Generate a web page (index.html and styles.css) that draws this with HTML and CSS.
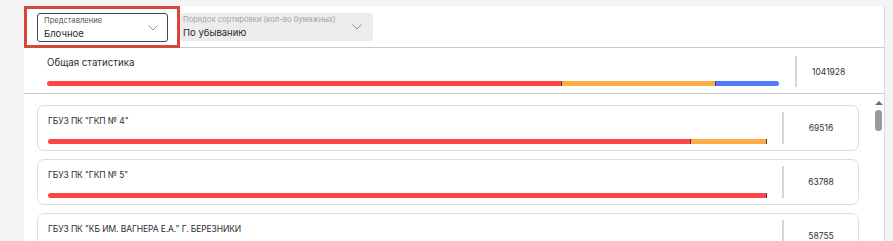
FILE: index.html
```html
<!DOCTYPE html>
<html lang="ru">
<head>
  <meta charset="UTF-8" />
  <title>Статистика</title>
  <link rel="stylesheet" href="styles.css">
</head>
<body>
  <div class="panel">

    <!-- фильтры -->
    <div class="toolbar">
      <div class="highlight">
        <div class="select select-active">
          <div class="select-text">
            <span class="select-label">Представление</span>
            <span class="select-value">Блочное</span>
          </div>
          <svg class="chevron" width="10" height="6" viewBox="0 0 10 6"><polyline points="0.5,0.5 5,5 9.5,0.5" fill="none" stroke="#8a8f99" stroke-width="1"/></svg>
        </div>
      </div>
      <div class="select select-disabled">
        <div class="select-text">
          <span class="select-label">Порядок сортировки (кол-во бумажных)</span>
          <span class="select-value">По убыванию</span>
        </div>
        <svg class="chevron" width="10" height="6" viewBox="0 0 10 6"><polyline points="0.5,0.5 5,5 9.5,0.5" fill="none" stroke="#8a8f99" stroke-width="1"/></svg>
      </div>
    </div>

    <!-- общая статистика -->
    <div class="summary">
      <div class="summary-main">
        <div class="summary-title">Общая статистика</div>
        <div class="bar bar-rounded">
          <div class="seg seg-red tick" style="width: 70.4%"></div>
          <div class="seg seg-orange tick" style="width: 21%"></div>
          <div class="seg seg-blue" style="width: 8.6%"></div>
        </div>
      </div>
      <div class="summary-value">1041928</div>
    </div>

    <!-- список -->
    <div class="list-wrap">
      <div class="list">
        <div class="card">
          <div class="card-main">
            <div class="card-title">ГБУЗ ПК "ГКП № 4"</div>
            <div class="bar">
              <div class="seg seg-red tick" style="width: 89.4%"></div>
              <div class="seg seg-orange tick" style="width: 10.6%"></div>
            </div>
          </div>
          <div class="card-value">69516</div>
        </div>
        <div class="card">
          <div class="card-main">
            <div class="card-title">ГБУЗ ПК "ГКП № 5"</div>
            <div class="bar">
              <div class="seg seg-red tick" style="width: 100%"></div>
            </div>
          </div>
          <div class="card-value">63788</div>
        </div>
        <div class="card">
          <div class="card-main">
            <div class="card-title">ГБУЗ ПК "КБ ИМ. ВАГНЕРА Е.А." Г. БЕРЕЗНИКИ</div>
            <div class="bar">
              <div class="seg seg-red tick" style="width: 92%"></div>
            </div>
          </div>
          <div class="card-value">58755</div>
        </div>
      </div>
      <div class="scrollbar">
        <div class="scroll-arrow"></div>
        <div class="scroll-thumb"></div>
      </div>
    </div>

  </div>
</body>
</html>
```
FILE: styles.css
```css
html, body {
  height: 100%;
}
body {
  margin: 0;
  background: #f4f4f4;
  font-family: 'Inter', 'Noto Sans', sans-serif;
  color: #2e2e33;
  overflow: hidden;
}
.panel {
  margin: 6px 0 0 24px;
  width: 860px;
  height: 235px;
  background: #fff;
  border-right: 1px solid #dcdcdc;
  overflow: hidden;
}
.toolbar {
  display: flex;
  align-items: flex-start;
  height: 41px;
  border-bottom: 1px solid #c9c9c9;
}
.highlight {
  flex-shrink: 0;
  width: 156px;
  height: 42px;
  box-sizing: border-box;
  border: 3px solid #d8463b;
  padding: 4px 0 0 10px;
  margin-bottom: -1px;
}
.highlight .select {
  width: 131px;
}
.select {
  display: flex;
  align-items: center;
  justify-content: space-between;
  height: 29px;
  box-sizing: border-box;
  padding: 0 9px 0 7px;
  border-radius: 3px;
}
.select-active {
  border: 1.5px solid #3c4262;
  padding-left: 6px;
}
.select-disabled {
  flex-shrink: 0;
  margin-top: 7px;
  width: 193px;
  height: 28px;
  background: #ececec;
  padding-left: 3px;
  padding-right: 11px;
}
.select-text {
  display: flex;
  flex-direction: column;
  line-height: 1;
  white-space: nowrap;
}
.select-label {
  font-size: 7.6px;
  color: #555;
  margin-bottom: 4px;
}
.select-disabled .select-label {
  color: #a5a5a5;
}
.select-value {
  font-size: 9.5px;
  color: #2a2a30;
}
.chevron {
  flex-shrink: 0;
}
.summary {
  display: flex;
  height: 45px;
  border-bottom: 1px solid #c9c9c9;
}
.summary-main {
  flex: 1;
  padding: 9px 16px 0 23px;
}
.summary-title {
  font-size: 9.7px;
  height: 24px;
  line-height: 12px;
}
.summary-value {
  width: 72px;
  margin: 8px 0 6px;
  border-left: 2px solid #d6d6d6;
  padding-left: 15px;
  font-size: 8.5px;
  display: flex;
  align-items: center;
  color: #333;
}
.bar {
  display: flex;
  height: 5px;
  border-radius: 3px 0 0 3px;
  overflow: hidden;
}
.bar-rounded {
  border-radius: 3px;
}
.seg {
  height: 100%;
  box-sizing: border-box;
}
.seg-red {
  background: #ff4545;
}
.seg-orange {
  background: #ffab43;
}
.seg-blue {
  background: #4f78ff;
}
.tick {
  border-right: 1px solid #4a3a30;
}
.list-wrap {
  display: flex;
}
.list {
  flex-shrink: 0;
  width: 822px;
  margin-left: 13px;
  padding-top: 11px;
  display: flex;
  flex-direction: column;
  gap: 8px;
}
.card {
  display: flex;
  height: 46px;
  box-sizing: border-box;
  border: 1px solid #dedede;
  border-radius: 7px;
}
.card-main {
  flex: 1;
  padding: 9px 15px 0 10px;
}
.card-title {
  font-size: 8.5px;
  height: 24px;
  line-height: 12px;
  letter-spacing: -0.1px;
}
.card-value {
  width: 74px;
  margin: 6px 0;
  border-left: 2px solid #d6d6d6;
  display: flex;
  align-items: center;
  justify-content: center;
  font-size: 8.5px;
  color: #333;
}
.scrollbar {
  flex-shrink: 0;
  width: 13px;
  margin-left: 13px;
  display: flex;
  flex-direction: column;
  align-items: center;
  padding-top: 7px;
}
.scroll-arrow {
  width: 0;
  height: 0;
  border-left: 4px solid transparent;
  border-right: 4px solid transparent;
  border-bottom: 4px solid #707070;
}
.scroll-thumb {
  margin-top: 5px;
  width: 7px;
  height: 21px;
  border-radius: 4px;
  background: #9a9a9a;
}
```
